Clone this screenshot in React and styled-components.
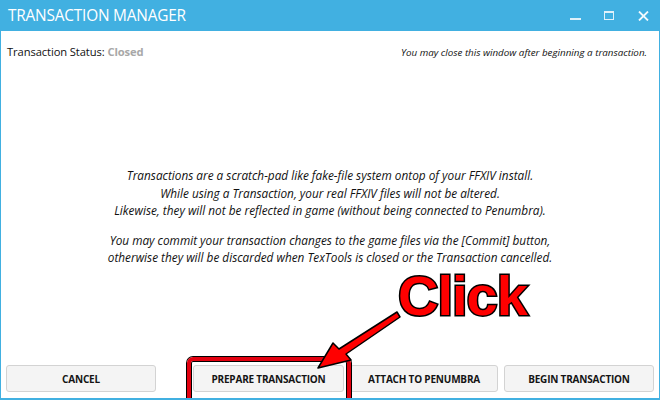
import styled, { createGlobalStyle } from "styled-components"

const GlobalStyle = createGlobalStyle`
    html, body {
        margin: 0;
        padding: 0;
        background: #ffffff;
    }
    body {
        font-family: "Open Sans", "Noto Sans", sans-serif;
    }
`

const Window = styled.div`
    position: relative;
    width: 660px;
    height: 400px;
    box-sizing: border-box;
    display: flex;
    flex-direction: column;
    border: 1px solid #41b0e1;
    border-top: 0;
    border-bottom-width: 2px;
    overflow: hidden;
    background: #ffffff;
`

const TitleBar = styled.div`
    height: 31px;
    flex-shrink: 0;
    display: flex;
    align-items: center;
    background: #41b0e1;
    padding-left: 8px;
    margin: 0 -1px;

    h1 {
        margin: 0;
        font-size: 15.4px;
        font-weight: 400;
        color: #ffffff;
        letter-spacing: -0.2px;
    }
`

const Controls = styled.div`
    margin-left: auto;
    display: flex;
    align-items: center;
    height: 100%;

    span {
        width: 34px;
        height: 100%;
        display: flex;
        align-items: center;
        justify-content: center;
    }
`

const Body = styled.div`
    flex: 1;
    display: flex;
    flex-direction: column;
    padding: 13px 5px 6px 5px;
`

const StatusRow = styled.div`
    display: flex;
    align-items: baseline;
    justify-content: space-between;
    padding-left: 1px;

    .status {
        font-size: 11.2px;
        letter-spacing: -0.1px;
        color: #111111;
        b {
            color: #a8a8a8;
        }
    }
    .hint {
        font-size: 9.8px;
        font-style: italic;
        color: #111111;
        margin-right: 7px;
    }
`

const Info = styled.div`
    flex: 1;
    display: flex;
    flex-direction: column;
    align-items: center;
    justify-content: center;
    gap: 12px;
    padding-top: 10px;

    p {
        margin: 0;
        font-size: 11.8px;
        font-style: italic;
        line-height: 17.5px;
        text-align: center;
        color: #111111;
    }
`

const ButtonRow = styled.div`
    display: flex;
    align-items: center;
    gap: 6px;
`

const Button = styled.button`
    width: ${props => props.$width || 150}px;
    height: 27px;
    margin-left: ${props => props.$push ? "auto" : "0"};
    background: #f4f4f4;
    border: 1px solid #d3d3d3;
    border-radius: 3px;
    font-family: "Open Sans", "Noto Sans", sans-serif;
    font-size: 10px;
    font-weight: 700;
    color: #141414;
    letter-spacing: -0.2px;
    cursor: pointer;
`

const Highlight = styled.div`
    position: absolute;
    left: 186px;
    top: 357px;
    width: 164px;
    height: 48px;
    box-sizing: border-box;
    border: 4px solid #e3000f;
    border-radius: 6px;
    box-shadow: 0 0 0 1px #000000, inset 0 0 0 1px #000000;
    pointer-events: none;
`

const ClickLabel = styled.div`
    position: absolute;
    left: 397px;
    top: 268px;
    font-family: "Liberation Sans", Arial, sans-serif;
    font-size: 56px;
    font-weight: 700;
    letter-spacing: -1px;
    color: #ff0000;
    -webkit-text-stroke: 3px #000000;
    paint-order: stroke fill;
    line-height: 1;
    pointer-events: none;
`

const Arrow = styled.svg`
    position: absolute;
    left: 300px;
    top: 300px;
    pointer-events: none;
`

const App = () => {

    return(
        <>
            <GlobalStyle />
            <Window>
                <TitleBar>
                    <h1>TRANSACTION MANAGER</h1>
                    <Controls>
                        <span>
                            <svg width="11" height="10" viewBox="0 0 11 10"><rect x="0" y="7" width="11" height="2" fill="#dff1fa"/></svg>
                        </span>
                        <span>
                            <svg width="10" height="9" viewBox="0 0 10 9" fill="none"><rect x="0.5" y="0.5" width="9" height="8" stroke="#dff1fa"/><rect x="0" y="0" width="10" height="2" fill="#dff1fa"/></svg>
                        </span>
                        <span>
                            <svg width="11" height="10" viewBox="0 0 11 10"><path d="M1 0.5 L10 9.5 M10 0.5 L1 9.5" stroke="#f2f9fd" strokeWidth="1.8"/></svg>
                        </span>
                    </Controls>
                </TitleBar>
                <Body>
                    <StatusRow>
                        <div className="status">Transaction Status: <b>Closed</b></div>
                        <div className="hint">You may close this window after beginning a transaction.</div>
                    </StatusRow>
                    <Info>
                        <p>
                            Transactions are a scratch-pad like fake-file system ontop of your FFXIV install.<br/>
                            While using a Transaction, your real FFXIV files will not be altered.<br/>
                            Likewise, they will not be reflected in game (without being connected to Penumbra).
                        </p>
                        <p>
                            You may commit your transaction changes to the game files via the [Commit] button,<br/>
                            otherwise they will be discarded when TexTools is closed or the Transaction cancelled.
                        </p>
                    </Info>
                    <ButtonRow>
                        <Button>CANCEL</Button>
                        <Button $push $width={151}>PREPARE TRANSACTION</Button>
                        <Button $width={148}>ATTACH TO PENUMBRA</Button>
                        <Button>BEGIN TRANSACTION</Button>
                    </ButtonRow>
                </Body>
                <Highlight />
                <ClickLabel>Click</ClickLabel>
                <Arrow width="110" height="75" viewBox="0 0 110 75">
                    <path
                        d="M96 12 L99 17 L45 54 L50 60 L17 68 L32 43 L38 49 Z"
                        fill="#ff0000"
                        stroke="#000000"
                        strokeWidth="1.5"
                        strokeLinejoin="round"
                    />
                </Arrow>
            </Window>
        </>
    )

}
export default App
